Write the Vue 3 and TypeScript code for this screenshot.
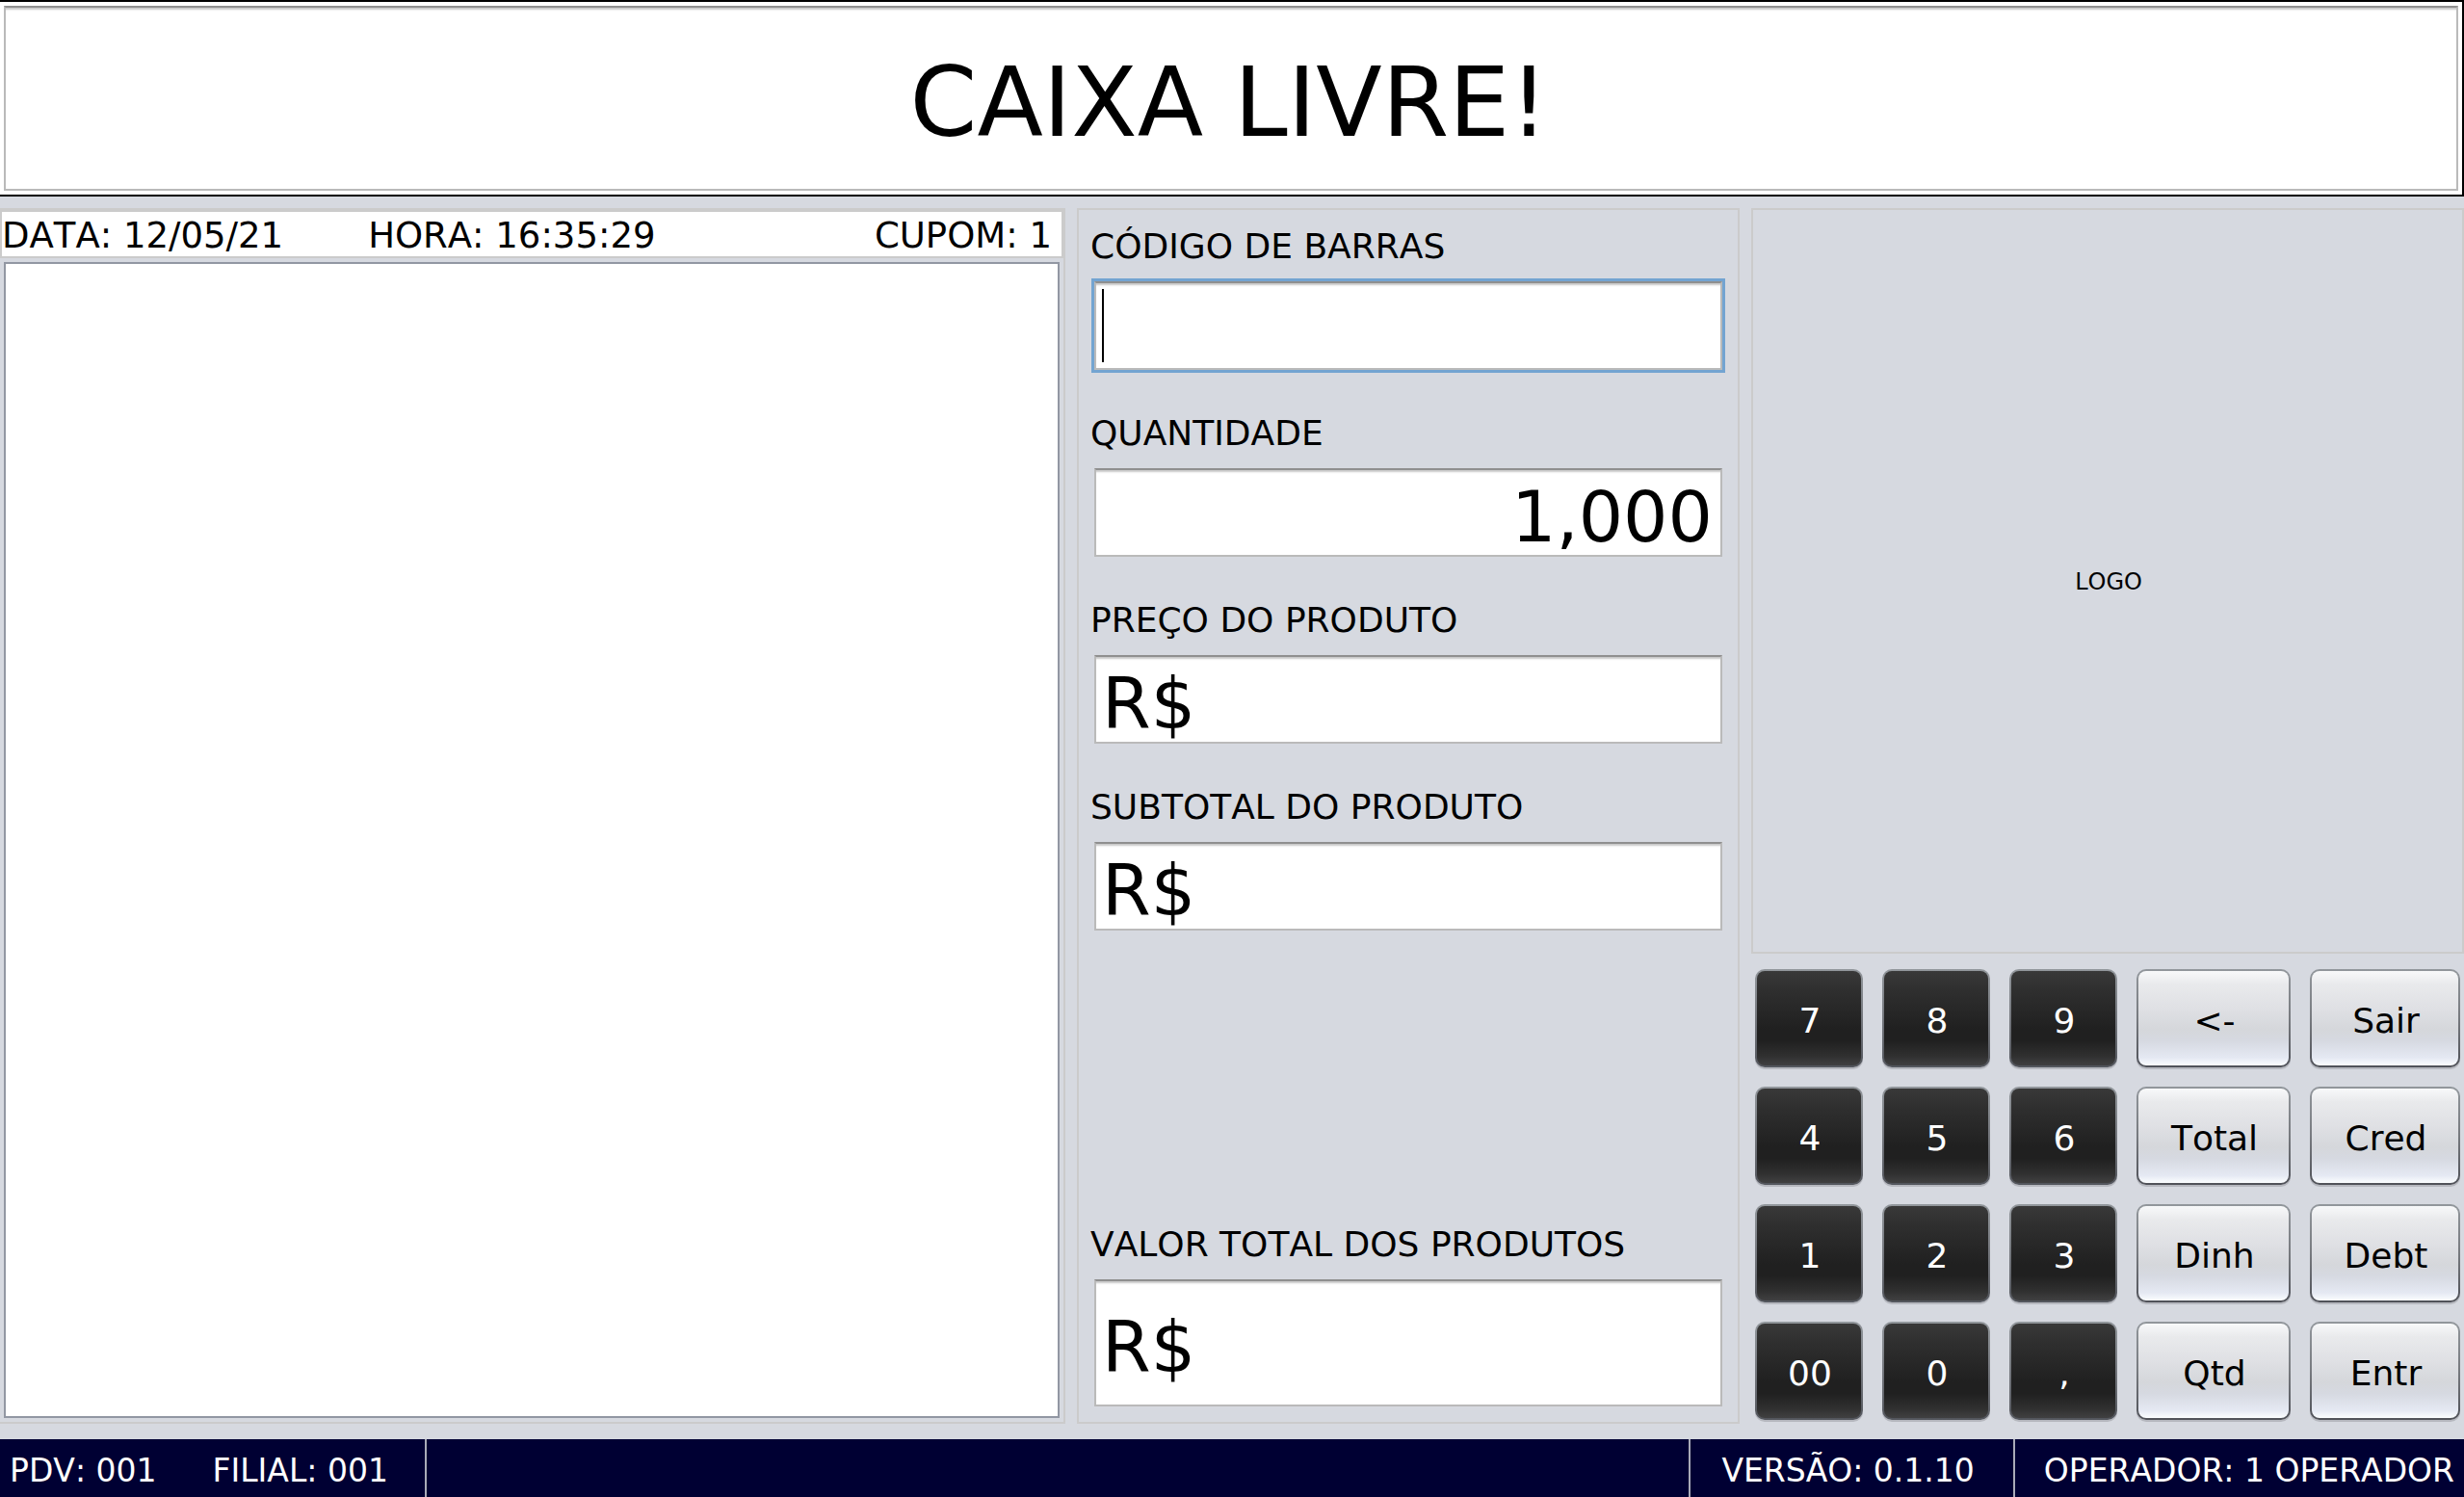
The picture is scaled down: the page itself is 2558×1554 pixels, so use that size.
<script setup lang="ts">
import { ref } from 'vue'

interface Field {
  id: string
  label: string
  value: string
  numeric?: boolean
  focused?: boolean
  total?: boolean
}

interface Key {
  text: string
  dark: boolean
}

const fields = ref<Field[]>([
  { id: 'codigo', label: 'CÓDIGO DE BARRAS', value: '', focused: true },
  { id: 'quantidade', label: 'QUANTIDADE', value: '1,000', numeric: true },
  { id: 'preco', label: 'PREÇO DO PRODUTO', value: 'R$' },
  { id: 'subtotal', label: 'SUBTOTAL DO PRODUTO', value: 'R$' },
  { id: 'total', label: 'VALOR TOTAL DOS PRODUTOS', value: 'R$', total: true },
])

const rows: string[][] = [
  ['7', '8', '9', '<-', 'Sair'],
  ['4', '5', '6', 'Total', 'Cred'],
  ['1', '2', '3', 'Dinh', 'Debt'],
  ['00', '0', ',', 'Qtd', 'Entr'],
]
const keys: Key[] = rows.flatMap((row) => row.map((text, i) => ({ text, dark: i < 3 })))
</script>

<template>
  <div class="pos">
    <header class="banner">
      <h1 class="status">CAIXA LIVRE!</h1>
    </header>

    <main class="main">
      <section class="panel receipt">
        <div class="strip">
          <span>DATA: 12/05/21</span>
          <span>HORA: 16:35:29</span>
          <span class="coupon">CUPOM: 1</span>
        </div>
        <div class="items"></div>
      </section>

      <form class="panel entry" @submit.prevent>
        <div v-for="f in fields" :key="f.id" class="group" :class="{ last: f.total }">
          <label :for="f.id">{{ f.label }}</label>
          <div class="box" :class="{ focused: f.focused }">
            <input
              :id="f.id"
              v-model="f.value"
              type="text"
              autocomplete="off"
              :class="{ numeric: f.numeric, tall: f.total }"
            />
            <span v-if="f.focused" class="caret"></span>
          </div>
        </div>
      </form>

      <section class="side">
        <div class="panel logo">LOGO</div>
        <div class="keypad">
          <button v-for="k in keys" :key="k.text" type="button" :class="{ dark: k.dark }">{{ k.text }}</button>
        </div>
      </section>
    </main>

    <footer class="footer">
      <div class="cell terminal">
        <span>PDV: 001</span>
        <span>FILIAL: 001</span>
      </div>
      <div class="cell spacer"></div>
      <div class="cell version">VERSÃO: 0.1.10</div>
      <div class="cell operator">OPERADOR: 1 OPERADOR</div>
    </footer>
  </div>
</template>

<style>
body {
  background: #d6d9e0;
}
</style>

<style scoped>
.pos,
.pos * {
  box-sizing: border-box;
}

.pos {
  display: flex;
  flex-direction: column;
  min-height: 100vh;
  background: #d6d9e0;
  color: #000;
  font-family: 'DejaVu Sans', Verdana, sans-serif;
  font-size: 36px;
  font-kerning: none;
  white-space: nowrap;
}

.banner {
  padding: 4px;
  background: #fff;
  border: 2px solid #000;
  border-left: 0;
}

.status {
  margin: 0;
  padding: 8px 4px 0 0;
  height: 192px;
  display: flex;
  align-items: center;
  justify-content: center;
  border: 2px solid #bababa;
  border-top-color: #8f8f8f;
  box-shadow: inset 0 3px 2px -1px #c8c8c8;
  font-size: 100px;
  font-weight: 400;
}

.main {
  flex: 1;
  display: grid;
  grid-template-columns: 1106fr 688fr 740fr;
  gap: 12px;
  padding: 12px 0 16px;
}

.panel {
  border: 2px solid #cbcbcb;
}

.receipt {
  display: flex;
  flex-direction: column;
  border-left: 0;
}

.strip {
  display: flex;
  align-items: center;
  gap: 88px;
  height: 50px;
  padding: 4px 10px 0 0;
  background: #fff;
  border: 2px solid #cbcbcb;
  font-size: 37px;
  line-height: 42px;
}

.coupon {
  margin-left: auto;
}

.items {
  flex: 1;
  margin: 4px;
  background: #fff;
  border: 2px solid #9297a3;
}

.entry {
  display: flex;
  flex-direction: column;
  gap: 44px;
  padding: 16px 12px;
}

.group {
  display: flex;
  flex-direction: column;
  gap: 14px;
}

.group.last {
  margin-top: auto;
}

label {
  line-height: 44px;
}

.box {
  position: relative;
  margin: 0 4px;
}

.box.focused {
  box-shadow: 0 0 0 3px #73a4d1;
}

input {
  display: block;
  width: 100%;
  height: 92px;
  margin: 0;
  padding: 8px 8px 0 6px;
  background: #fff;
  border: 2px solid #bababa;
  border-top-color: #8f8f8f;
  border-radius: 0;
  box-shadow: inset 0 3px 2px -1px #c8c8c8;
  outline: none;
  color: #000;
  font: inherit;
  font-size: 73px;
}

input.numeric {
  text-align: right;
}

input.tall {
  height: 132px;
}

.caret {
  position: absolute;
  left: 8px;
  top: 8px;
  bottom: 8px;
  width: 2px;
  background: #000;
}

.side {
  display: flex;
  flex-direction: column;
  gap: 16px;
}

.logo {
  flex: 1;
  display: flex;
  align-items: center;
  justify-content: center;
  padding: 2px 0 0 2px;
  font-size: 24px;
}

.keypad {
  display: grid;
  grid-template-columns: 112fr 112fr 112fr 160fr 156fr;
  gap: 20px;
  padding: 0 4px 4px;
}

button {
  min-width: 0;
  height: 102px;
  margin: 0;
  padding: 4px 0 0 2px;
  border: 2px solid transparent;
  border-radius: 10px;
  background:
    linear-gradient(#f8f9fa 0%, #e9eaec 14%, #dfe0e4 40%, #d5d7db 62%, #d6d9e1 74%, #e5e9f3 92%, #fbfdff 100%) padding-box,
    linear-gradient(#92979c, #777a7f 50%, #505259) border-box;
  box-shadow: 0 2px 0 #b6b8bf;
  color: #000;
  font: inherit;
}

button.dark {
  background:
    linear-gradient(#393939 0%, #2f2f2f 20%, #202020 62%, #202020 74%, #303030 90%, #404041 100%) padding-box,
    linear-gradient(#92979c, #74777d 50%, #53565d) border-box;
  color: #fff;
}

.footer {
  display: flex;
  height: 60px;
  background: #000033;
  color: #fff;
  font-size: 33px;
}

.cell {
  display: flex;
  align-items: center;
  padding-top: 5px;
}

.cell + .cell {
  border-left: 2px solid #a9abb8;
}

.terminal {
  gap: 58px;
  padding-left: 10px;
  padding-right: 38px;
}

.spacer {
  flex: 1;
}

.version {
  padding-left: 32px;
  padding-right: 40px;
}

.operator {
  padding-left: 30px;
  padding-right: 10px;
}
</style>
